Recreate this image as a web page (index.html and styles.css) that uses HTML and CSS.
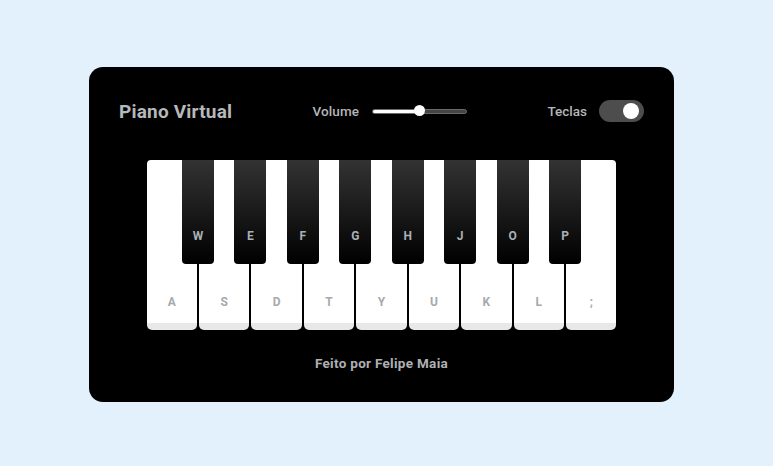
FILE: index.html
```html
<!DOCTYPE html>
<html lang="pt-BR">
<head>
<meta charset="utf-8">
<title>Piano Virtual</title>
<link rel="stylesheet" href="styles.css">
</head>
<body>
<main class="wrapper">
  <header class="top">
    <h2 class="title">Piano Virtual</h2>
    <div class="control volume">
      <span class="label">Volume</span>
      <div class="slider">
        <div class="track"><div class="fill"></div></div>
        <div class="thumb"></div>
      </div>
    </div>
    <div class="control keys-toggle">
      <span class="label">Teclas</span>
      <div class="switch"><div class="knob"></div></div>
    </div>
  </header>
  <ul class="piano">
    <li class="key white"><span>A</span></li>
    <li class="key black"><span>W</span></li>
    <li class="key white"><span>S</span></li>
    <li class="key black"><span>E</span></li>
    <li class="key white"><span>D</span></li>
    <li class="key black"><span>F</span></li>
    <li class="key white"><span>T</span></li>
    <li class="key black"><span>G</span></li>
    <li class="key white"><span>Y</span></li>
    <li class="key black"><span>H</span></li>
    <li class="key white"><span>U</span></li>
    <li class="key black"><span>J</span></li>
    <li class="key white"><span>K</span></li>
    <li class="key black"><span>O</span></li>
    <li class="key white"><span>L</span></li>
    <li class="key black"><span>P</span></li>
    <li class="key white"><span>;</span></li>
  </ul>
  <footer class="credit">Feito por Felipe Maia</footer>
</main>
</body>
</html>
```
FILE: styles.css
```css
* { box-sizing: border-box; margin: 0; padding: 0; }
html, body { height: 100%; }
body {
  background: #e3f1fd;
  font-family: Roboto, "Liberation Sans", sans-serif;
  display: flex;
  justify-content: flex-start;
  padding: 67px 0 0 89px;
}
.wrapper {
  width: 585px;
  height: 335px;
  background: #000;
  border-radius: 14px;
  padding: 33px 30px 0 30px;
  display: flex;
  flex-direction: column;
  align-items: center;
}
.top {
  width: 100%;
  height: 22px;
  display: flex;
  align-items: center;
  justify-content: space-between;
  color: #b4b4b4;
}
.title {
  font-size: 19px;
  font-weight: 700;
  letter-spacing: 0.2px;
  color: #b6b8bb;
}
.control { display: flex; align-items: center; }
.label { font-size: 13.5px; font-weight: 500; color: #b4b6b8; }
.volume .label { margin-right: 13px; letter-spacing: 0.1px; }
.keys-toggle .label { margin-right: 12px; }
.slider {
  position: relative;
  width: 95px;
  height: 12px;
  display: flex;
  align-items: center;
}
.track {
  width: 100%;
  height: 5px;
  border-radius: 3px;
  background: #454545;
  border: 1px solid #6a6a6a;
  overflow: hidden;
}
.fill { width: 48px; height: 100%; background: #fff; }
.thumb {
  position: absolute;
  left: 42px;
  top: 0;
  width: 11px;
  height: 11px;
  border-radius: 50%;
  background: #fff;
}
.switch {
  width: 45px;
  height: 22px;
  border-radius: 11px;
  background: #4d4d4d;
  display: flex;
  align-items: center;
  justify-content: flex-end;
  padding-right: 5px;
}
.knob { width: 16px; height: 16px; border-radius: 50%; background: #fff; }

.piano {
  list-style: none;
  display: flex;
  width: 472px;
  height: 170px;
  margin-top: 38px;
}
.key {
  display: flex;
  flex-direction: column;
  justify-content: flex-end;
  align-items: center;
  font-weight: 700;
  font-size: 12px;
  line-height: 14px;
  padding-bottom: 21px;
}
.white {
  flex: 1 1 0;
  margin: 0 1px;
  height: 170px;
  border-radius: 4px 4px 5px 5px;
  background: linear-gradient(to bottom, #fff calc(100% - 7px), #e8e8e8 calc(100% - 7px));
  color: #a6a9ad;
}
.black {
  flex: 0 0 32px;
  width: 32px;
  height: 104px;
  margin: 0 -16px;
  position: relative;
  z-index: 2;
  border-radius: 0 0 4px 4px;
  background: linear-gradient(to bottom, #333 0%, #000 100%);
  color: #a9b0b6;
}
.credit {
  margin-top: 25px;
  font-size: 13.5px;
  font-weight: 700;
  letter-spacing: 0.3px;
  color: #aeb0b3;
}
```
